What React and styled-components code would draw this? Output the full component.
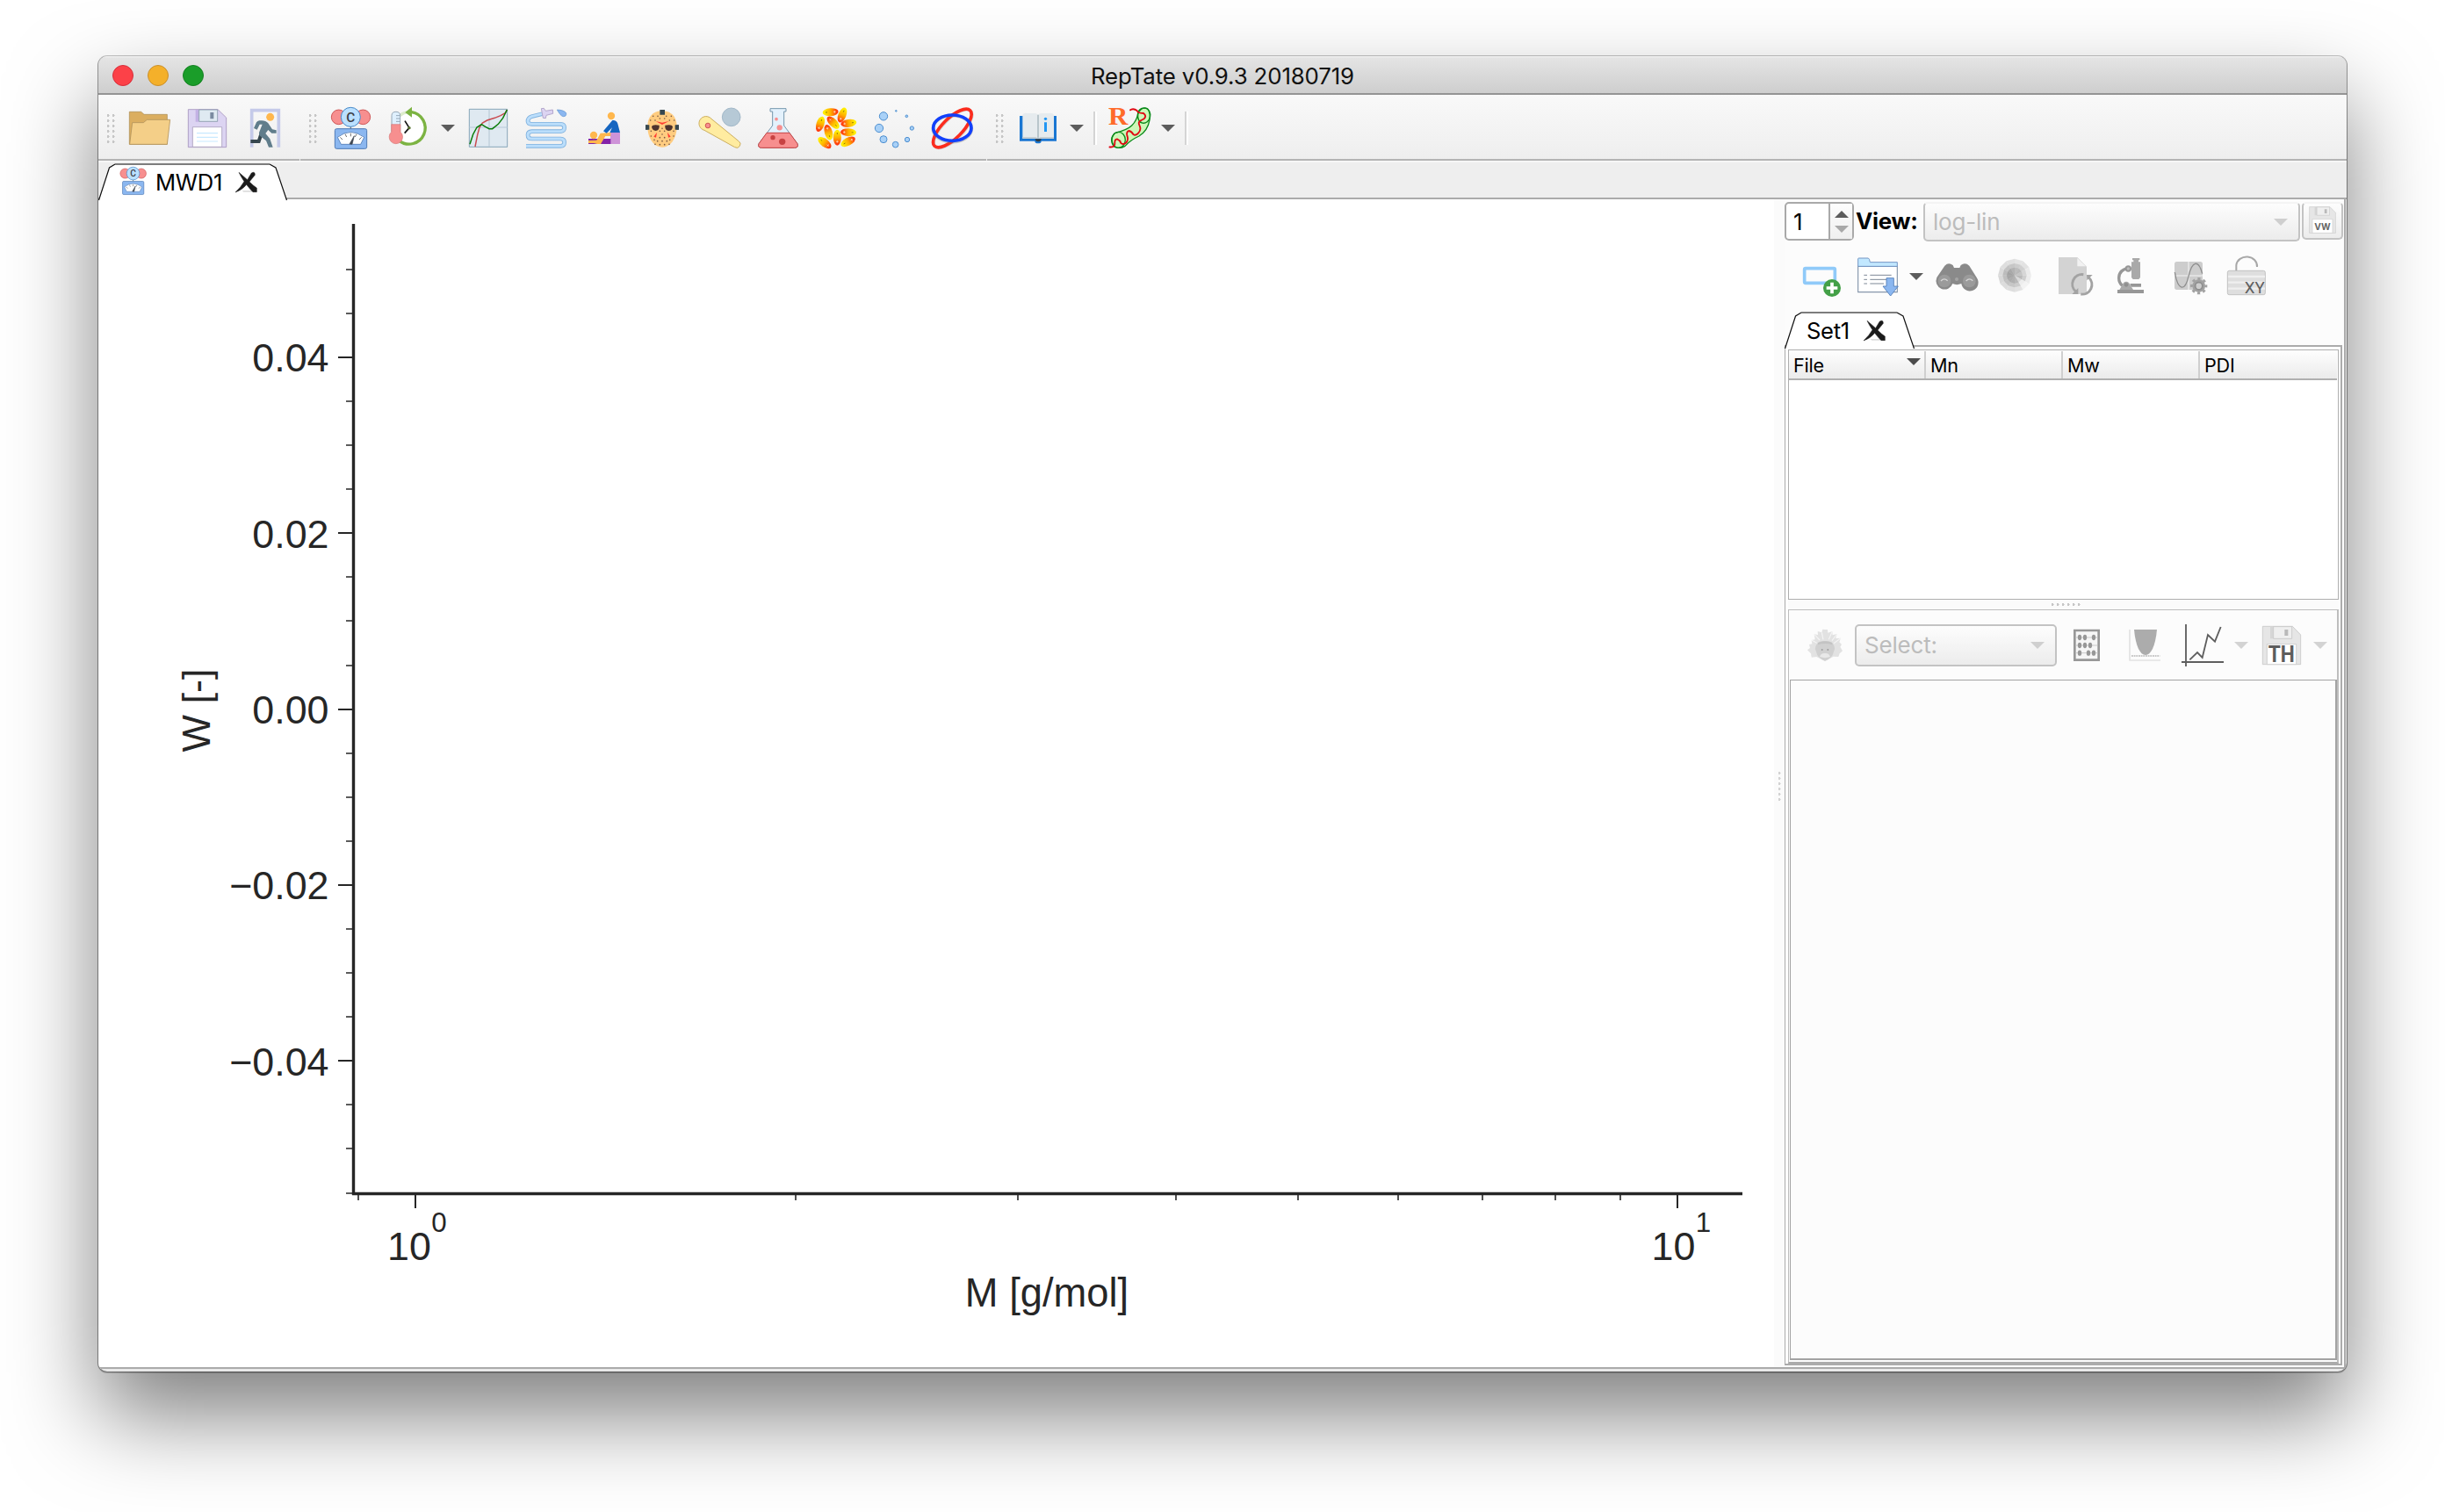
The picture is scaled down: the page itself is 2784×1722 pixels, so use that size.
import React from "react";
import styled, { createGlobalStyle, css } from "styled-components";

const Global = createGlobalStyle`
  *, *::before, *::after { box-sizing: border-box; }
  html, body { margin: 0; background: #fff; overflow: hidden; }
  body { font-family: Inter, "Liberation Sans", sans-serif; color: #000; }
  svg { display: block; flex: none; overflow: visible; }
`;

const line = "#ababab";

/* ---------- window ---------- */
const Page = styled.div`
  width: 2784px;
  height: 1722px;
  padding: 64px 112px 160px;
  background: #fff;
`;
const Window = styled.main`
  width: 2560px;
  height: 1498px;
  display: flex;
  flex-direction: column;
  overflow: hidden;
  border-radius: 10px;
  background: #e9e9e9;
  box-shadow: 0 0 0 1px rgba(0, 0, 0, 0.24), 0 1px 0 1px rgba(0, 0, 0, 0.2), 0 50px 100px rgba(0, 0, 0, 0.5);
`;
const TitleBar = styled.header`
  height: 44px;
  flex: none;
  display: grid;
  grid-template-columns: 1fr auto 1fr;
  align-items: center;
  padding: 0 16px;
  background: linear-gradient(#f4f4f4 0, #e4e4e4 2px, #cecece);
  border-bottom: 2px solid #949494;
`;
const Lights = styled.div`
  display: flex;
  gap: 16px;
  padding-top: 2px;
`;
const Light = styled.i`
  width: 24px;
  height: 24px;
  border-radius: 50%;
  background: ${(p) => p.$fill};
  border: 1px solid ${(p) => p.$edge};
`;
const Title = styled.h1`
  margin: 0;
  padding-top: 3px;
  font-size: 25.8px;
  line-height: 32px;
  font-weight: 400;
  letter-spacing: -0.12px;
  color: #111;
  white-space: nowrap;
`;

/* ---------- toolbars ---------- */
const ToolBar = styled.nav`
  height: 75px;
  flex: none;
  display: flex;
  background: linear-gradient(#f9f9f9, #eeeeee);
`;
const ToolGroup = styled.div`
  display: flex;
  align-items: center;
  height: 75px;
  padding: 3px ${(p) => p.$end || 0}px 0 ${(p) => p.$start || 0}px;
  border-bottom: 2px solid #b4b4b4;
  margin-right: ${(p) => (p.$last ? 0 : 1)}px;
  flex: ${(p) => (p.$last ? 1 : "none")};
`;
const Handle = styled.i`
  width: 9px;
  height: 33px;
  margin-right: 6px;
  background: radial-gradient(circle at 1px 1.5px, #c6c6c6 1.4px, transparent 1.7px) 0 0 / 6px 6px;
  ${(p) =>
    p.$row &&
    css`
      width: 33px;
      height: 3px;
      margin: 0;
    `}
  ${(p) =>
    p.$column &&
    css`
      width: 3px;
      height: 33px;
      margin: 0;
      opacity: 0.75;
    `}
`;
const ToolButton = styled.button`
  width: 66px;
  height: 66px;
  padding: 0;
  border: 0;
  background: none;
  display: flex;
  align-items: center;
  justify-content: center;
  flex: none;
`;
const Caret = styled.i`
  width: ${(p) => p.$width || 24}px;
  padding-right: ${(p) => p.$shift || 0}px;
  display: flex;
  justify-content: center;
  flex: none;
  &::after {
    content: "";
    border: 8px solid transparent;
    border-top-color: ${(p) => p.$color || "#5c5c5c"};
    border-bottom: 0;
    ${(p) =>
      p.$up &&
      css`
        border-bottom: 8px solid ${p.$color || "#5c5c5c"};
        border-top: 0;
      `}
  }
`;
const Divider = styled.i`
  width: 4px;
  height: 38px;
  margin: 0 4px 0 6px;
  border-left: 2px solid #d4d4d4;
  border-right: 2px solid #fff;
`;

/* ---------- tabs ---------- */
const TabStrip = styled.div`
  height: 44px;
  flex: none;
  display: flex;
  align-items: flex-end;
  background: linear-gradient(#f6f6f6 0 2px, #eeeeee 2px);
  border-bottom: 2px solid ${line};
`;
const Tab = styled.div`
  position: relative;
  z-index: 1;
  width: ${(p) => p.$width}px;
  height: 44px;
  margin-bottom: -4px;
  padding: 1px 0 0 ${(p) => p.$inset}px;
  display: flex;
  align-items: center;
  font-size: 25.6px;
  line-height: 30px;
  flex: none;
`;
const TabShape = styled.svg`
  position: absolute;
  inset: 0;
  z-index: -1;
`;
const TabText = styled.span`
  width: ${(p) => p.$width}px;
  padding-top: 1px;
  letter-spacing: -0.3px;
  white-space: nowrap;
`;

/* ---------- body ---------- */
const Body = styled.div`
  height: 1332px;
  margin-right: 1px;
  display: flex;
  background: #fff;
  border-right: 2px solid ${line};
  border-bottom: 2px solid ${line};
`;
const PlotArea = styled.section`
  width: 1908px;
  flex: none;
`;
const SplitBar = styled.div`
  width: 12px;
  flex: none;
  display: flex;
  align-items: center;
  justify-content: center;
  padding: 7px 0 0 1px;
  background: #fbfbfb;
`;
const Side = styled.aside`
  flex: 1;
  min-width: 0;
  background: #fcfcfc;
  display: flex;
  flex-direction: column;
  padding-top: 3px;
`;
const ViewRow = styled.div`
  height: 45px;
  display: flex;
  align-items: flex-start;
`;
const Spin = styled.div`
  width: 79px;
  height: 44px;
  display: flex;
  border: 2px solid #a9a9a9;
  border-radius: 5px;
  background: #fff;
  font-size: 26px;
  line-height: 41px;
`;
const SpinValue = styled.span`
  width: 50px;
  padding-left: 8px;
  border-right: 2px solid #a9a9a9;
`;
const SpinArrows = styled.span`
  flex: 1;
  display: flex;
  flex-direction: column;
  align-items: center;
  justify-content: center;
  gap: 9px;
  background: linear-gradient(#fdfdfd, #efefef);
`;
const ViewLabel = styled.b`
  width: 79px;
  padding-left: 2px;
  font-size: 25.9px;
  line-height: 44px;
  font-weight: 700;
  letter-spacing: -0.3px;
`;
const Combo = styled.div`
  width: ${(p) => p.$width}px;
  height: ${(p) => p.$height}px;
  margin: 0 ${(p) => p.$gap || 0}px;
  padding: 0 12px 0 9px;
  display: flex;
  align-items: center;
  justify-content: space-between;
  border: 2px solid #c3c3c3;
  border-radius: 5px;
  border-top-color: ${(p) => (p.$openTop ? "#f4f4f4" : "#c3c3c3")};
  background: linear-gradient(#fdfdfd, #ececec);
  color: #bcbcbc;
  font-size: 26px;
  letter-spacing: -0.2px;
  flex: none;
`;
const SmallButton = styled.button`
  width: 47px;
  height: 43px;
  margin-left: 2px;
  padding: 0 0 2px;
  display: flex;
  align-items: center;
  justify-content: center;
  border: 2px solid #c3c3c3;
  border-top-color: #f4f4f4;
  border-radius: 5px;
  background: linear-gradient(#fdfdfd, #ececec);
`;
const IconRow = styled.div`
  height: 79px;
  padding: 1px 0 0 9px;
  display: flex;
  align-items: center;
`;
const SetTabs = styled.div`
  height: 41px;
  margin-bottom: -2px;
  display: flex;
  align-items: flex-start;
  position: relative;
`;
const Frame = styled.div`
  width: 635px;
  height: 1162px;
  padding: 3px 2px 0 3px;
  border: 2px solid ${line};
  border-left-width: 1px;
  background: #fff;
`;
const Table = styled.table`
  display: block;
  height: 285px;
  border: 1px solid #aeaeae;
  border-spacing: 0;
  background: #fff;
`;
const HeadRow = styled.tr`
  display: flex;
  height: 34px;
  padding-top: 1px;
  background: linear-gradient(#fefefe, #ebebeb);
  border-bottom: 2px solid #b0b0b0;
`;
const Head = styled.th`
  width: 156px;
  padding: 0 4px 0 5px;
  display: flex;
  align-items: center;
  justify-content: space-between;
  font-size: 21.6px;
  font-weight: 400;
  letter-spacing: -0.2px;
  border-right: ${(p) => (p.$last ? 0 : 2)}px solid #cfcfcf;
`;
const SortMark = styled.span`
  padding-bottom: 8px;
`;
const RowSplit = styled.div`
  height: 11px;
  display: flex;
  align-items: center;
  justify-content: center;
  padding-left: 5px;
  background: #fbfbfb;
`;
const Theory = styled.section`
  height: 859px;
  display: flex;
  flex-direction: column;
  padding: 0 0 2px 1px;
  border: 1px solid #bdbdbd;
  border-right-width: 2px;
  border-bottom: 2px solid ${line};
  background: #fcfcfc;
`;
const TheoryTools = styled.div`
  height: 79px;
  padding-left: 7px;
  display: flex;
  align-items: center;
  flex: none;
`;
const Output = styled.div`
  flex: 1;
  border: 1px solid #a3a3a3;
  border-right-width: 2px;
  border-bottom-width: 2px;
  background: #fcfcfc;
`;

/* ---------- icons ---------- */
const Icon = ({ at, size = 48, box = 144, children }) => (
  <svg width={size} height={size} viewBox={`${at[0]} ${at[1]} ${box} ${box}`} aria-hidden="true">
    {children}
  </svg>
);

const Folder = () => (
  <Icon at={[138, 201]}>
    <g stroke="#b3945c" strokeWidth="2.5">
      <path d="M142 328V217H182L192 226H271V328Z" fill="#dbae60" />
      <path d="M143 328 152 254H190L202 244H281L271 328Z" fill="#f4cf88" />
    </g>
  </Icon>
);
const Floppy = () => (
  <Icon at={[336, 201]}>
    <path d="M343 209H444L473 237V338H343Z" fill="#dcd4f2" stroke="#a593bd" strokeWidth="2.5" />
    <path d="M368 210H379V251H368Z" fill="#c3b2e4" />
    <path d="M380 210H443V250H380Z" fill="#dfeaf2" stroke="#8698a8" strokeWidth="2.5" />
    <path d="M418 219H430V241H418Z" fill="#7a8ba0" />
    <path d="M358 269H458V337H358Z" fill="#fff" stroke="#a9a0bd" strokeWidth="2.5" />
    <path d="M372 290H444M372 304H444M372 318H444" stroke="#c8e9ff" strokeWidth="3.5" />
  </Icon>
);
const Exit = () => (
  <Icon at={[534, 201]}>
    <path d="M560 338V212H652V338" fill="none" stroke="#c5cae9" strokeWidth="11" />
    <circle cx="623" cy="235" r="13.5" fill="#ffb74d" />
    <path d="M594 288 584 318H556" fill="none" stroke="#37474f" strokeWidth="12" />
    <path d="M586 247Q606 244 616 256L630 277 644 280V290H628L616 279 607 291 622 309 632 338H618L609 316 588 299Q582 292 587 283L596 260H587L578 278 567 273 576 253Q579 248 586 247Z" fill="#607d8b" />
  </Icon>
);
const Mwd = ({ size }) => (
  <Icon at={[828, 201]} size={size}>
    <g fill="#f78f8f" stroke="#c74343" strokeWidth="2.5">
      <circle cx="857" cy="235" r="25" />
      <circle cx="940" cy="235" r="25" />
    </g>
    <path d="M898 267V276" stroke="#555" strokeWidth="3" />
    <circle cx="898" cy="235" r="33" fill="#bae0ff" stroke="#4788c7" strokeWidth="3" />
    <text x="898" y="251" textAnchor="middle" fontFamily="Roboto, sans-serif" fontSize="46" fontWeight="500" fill="#3d3d45">C</text>
    <rect x="844" y="275" width="109" height="68" rx="6" fill="#8bb7f0" stroke="#4e7ab5" strokeWidth="3" />
    <path d="M853 304Q898 269 944 304L932 328H865Z" fill="#fff" stroke="#4e7ab5" strokeWidth="2.5" />
    <path d="M862 304 870 312M879 293 884 303M898 290V301M918 293 913 303M935 304 927 312" stroke="#555" strokeWidth="2.5" />
    <path d="M894 327 910 299 903 328Z" fill="#3e4651" stroke="#3e4651" strokeWidth="2" />
  </Icon>
);
const Tts = () => (
  <Icon at={[1026, 201]}>
    <circle cx="1098" cy="272" r="56" fill="#fff" />
    <path d="M1065 230A54 54 0 0 1 1096 218" fill="none" stroke="#dcebcb" strokeWidth="10" />
    <path d="M1106 218A55 55 0 1 1 1064 316" fill="none" stroke="#7cb342" strokeWidth="10" />
    <path d="M1084 219 1107 200V236Z" fill="#7cb342" />
    <path d="M1083 248 1098 272 1082 290" fill="none" stroke="#111" strokeWidth="5" />
    <circle cx="1098" cy="272" r="5" fill="#55702c" />
    <path d="M1038 285V230Q1038 217 1052.500 217T1067 230V285" fill="#dff0fe" stroke="#8698a8" strokeWidth="2.5" />
    <path d="M1037 260H1068V286A23 23 0 1 1 1037 286Z" fill="#f78f8f" stroke="#d87878" strokeWidth="2" />
    <path d="M1053 230H1066M1053 240H1066M1053 250H1066" stroke="#8698a8" strokeWidth="2.500" />
  </Icon>
);
const FitChart = () => (
  <Icon at={[36, 51]}>
    <path d="M43 58H173V187H43Z" fill="#dfe9f1" stroke="#7496ad" strokeWidth="2.5" />
    <path d="M111 59V186M44 120H172" stroke="#c5d3df" strokeWidth="5" />
    <path d="M63 186 71 146 78 120 88 105 104 96 130 88 150 80 166 71 172 60" fill="none" stroke="#c94b50" strokeWidth="4.500" />
    <path d="M45 178 56 144 69 120 85 110 98 118 111 125H122L142 109 158 88 172 60" fill="none" stroke="#0b7d0b" strokeWidth="4.500" />
  </Icon>
);
const Hose = () => (
  <Icon at={[234, 51]}>
    {[["#7fb1de", 14], ["#bbdefb", 9]].map(([c, w]) => (
      <path key={c} d="M292 74 256 83Q243 88 243 99 243 109 257 109H355Q368 110 368 121 368 133 355 134H257Q243 135 243 146 243 159 257 159H355Q368 160 368 171 368 184 355 184H237" fill="none" stroke={c} strokeWidth={w} />
    ))}
    <path d="M289 56 298 55 304 64 328 60 329 73 306 79 304 89 295 88Z" fill="#dcd4f2" stroke="#a99bc4" strokeWidth="2.500" />
    <path d="M343 60Q367 61 374 71 376 83 364 83 355 82 343 60Z" fill="#8bb7f0" stroke="#5c91cf" strokeWidth="2" />
  </Icon>
);
const Creep = () => (
  <Icon at={[432, 51]}>
    <path d="M525 137H558V177H525Z" fill="#ce93d8" />
    <path d="M450 159H526V177H450Z" fill="#8322a8" />
    <circle cx="468" cy="147" r="12.500" fill="#ffb74d" />
    <path d="M450 165 478 164 491 140 526 138V150H508L492 177H480L468 174H450Z" fill="#ffb74d" />
    <circle cx="528" cy="81" r="12.500" fill="#ffb74d" />
    <path d="M532 96Q545 94 550 107L558 138H523L531 121 512 140 501 133Z" fill="#1565c0" />
  </Icon>
);
const maskHoles = [
  [671, 82], [687, 82], [716, 82], [733, 82], [662, 96], [678, 96], [694, 90], [710, 90], [727, 96], [743, 96],
  [702, 124], [694, 133], [710, 133], [664, 133], [741, 133], [702, 144], [664, 150], [694, 155], [710, 155], [741, 150],
  [702, 167], [675, 163], [728, 163], [686, 167], [718, 167], [678, 178], [694, 179], [710, 179], [726, 178],
];
const Mask = () => (
  <Icon at={[630, 51]}>
    <path d="M646 112H758V128H646Z" fill="#455a64" />
    <path d="M702 64C735 64 752 85 752 118 752 155 732 188 702 188S652 155 652 118C652 85 669 64 702 64Z" fill="#ffcc80" />
    <path d="M694 60H711V77H694ZM645 112H658V128H645ZM746 112H759V128H746Z" fill="#37474f" />
    <path d="M680 99 702 104 725 99 702 111ZM684 137 673 152 681 155ZM720 137 731 152 723 155Z" fill="#ff3d32" />
    <path d="M666 117Q670 109 692 113 694 131 680 132 667 131 666 117ZM738 117Q734 109 712 113 710 131 724 132 737 131 738 117Z" fill="#4e342e" />
    {maskHoles.map(([x, y]) => <circle key={`${x}-${y}`} cx={x} cy={y} r="2.500" fill="#7a5a42" />)}
  </Icon>
);
const BatBall = () => (
  <Icon at={[828, 51]}>
    <circle cx="938" cy="85" r="31" fill="#b6c9d6" stroke="#98b0c2" strokeWidth="2.5" />
    <path d="M870 91 963 167A12 12 0 0 1 950 188L846 130A24 24 0 1 1 870 91Z" fill="#ffeca0" stroke="#ccae5f" strokeWidth="3" />
    <circle cx="858" cy="114" r="8.500" fill="#f78f8f" stroke="#c74343" strokeWidth="2.5" />
  </Icon>
);
const Flask = () => (
  <Icon at={[1026, 51]}>
    <path d="M1071 56H1125V66H1118V114L1164 176Q1169 190 1154 190H1042Q1027 190 1032 176L1079 114V66H1071Z" fill="#dff0fe" fillOpacity=".8" stroke="#7496ad" strokeWidth="3" />
    <path d="M1059 139H1137L1164 176Q1169 190 1154 190H1042Q1027 190 1032 176Z" fill="#f78f8f" stroke="#c74343" strokeWidth="3" />
    <circle cx="1092" cy="92" r="5.500" fill="#f78f8f" />
    <circle cx="1103" cy="121" r="9.500" fill="#f78f8f" />
    <circle cx="1080" cy="155" r="8" fill="#c74343" />
    <circle cx="1112" cy="169" r="11" fill="#c74343" />
  </Icon>
);
const pills = [
  [77, 68, -4], [117, 78, 112], [42, 109, 108], [86, 104, 225], [139, 106, 172], [70, 137, 255],
  [100, 155, 90], [138, 137, 182], [57, 173, 38], [137, 169, -28],
];
const Dielectric = () => (
  <Icon at={[24, 51]}>
    <defs>
      <linearGradient id="pill">
        <stop offset=".1" stopColor="#ffee00" />
        <stop offset=".5" stopColor="#ffb000" />
        <stop offset=".9" stopColor="#ff3c10" />
      </linearGradient>
    </defs>
    {pills.map(([x, y, a]) => (
      <g key={`${x}-${y}`} transform={`translate(${x} ${y}) rotate(${a})`}>
        <ellipse rx="27" ry="13.500" fill="url(#pill)" />
        <path d="M-17 0H-11" stroke="#6b5a00" strokeWidth="2" />
        <path d="M10 0H18M14-4V4" stroke="#ffe2cf" strokeWidth="2" />
      </g>
    ))}
  </Icon>
);
const Particles = () => (
  <Icon at={[222, 51]}>
    <g fill="#a9d1f7" stroke="#4e8fd0" strokeWidth="3">
      {[[258, 82, 14], [243, 123, 14], [258, 161, 12], [299, 179, 10], [339, 162, 8], [355, 123, 6.500], [337, 82, 4], [301, 64, 2.500]].map(([x, y, r]) => (
        <circle key={`${x}-${y}`} cx={x} cy={y} r={r} />
      ))}
    </g>
  </Icon>
);
const Rings = () => (
  <Icon at={[420, 51]}>
    <g fill="none" strokeWidth="11">
      <ellipse cx="495" cy="125" rx="86" ry="34" transform="rotate(-45 495 125)" stroke="#9a9a9a" strokeOpacity=".35" />
      <ellipse cx="493" cy="123" rx="86" ry="34" transform="rotate(-45 493 123)" stroke="#fb2c1e" />
      <ellipse cx="493" cy="125" rx="66" ry="45" stroke="#777" strokeOpacity=".35" />
      <ellipse cx="493" cy="122" rx="65" ry="44" stroke="#1240fb" />
    </g>
  </Icon>
);
const Book = () => (
  <Icon at={[714, 51]}>
    <path d="M723 81H849V167H797A11 8 0 0 1 775 167H723Z" fill="#1976d2" />
    <path d="M776 160H797A10 8 0 0 1 776 160Z" fill="#2f3b43" />
    <path d="M733 77Q738 70 748 72H776Q785 73 786 78 788 72 797 72H825Q836 70 840 77V158H733Z" fill="#e6ebee" />
    <path d="M733 153H779L786 158 793 153H840V159H733Z" fill="#c5ced3" />
    <path d="M786 77V157" stroke="#b0bec5" strokeWidth="5" />
    <path d="M807 103H816V135H807Z" fill="#2196f3" />
    <circle cx="811.500" cy="91" r="5" fill="#2196f3" />
  </Icon>
);
const RepTateLogo = () => (
  <Icon at={[1026, 51]}>
    <g fill="#cdf7b8" stroke="#0b8a1b" strokeWidth="4">
      <path d="M1048 140Q1092 128 1106 114 1124 96 1127 72 1132 50 1157 55 1171 64 1167 95 1160 133 1131 150 1102 163 1083 184 1064 196 1044 185 1028 160 1048 140Z" />
      <ellipse cx="1061" cy="163" rx="23" ry="27" fill="none" />
      <ellipse cx="1148" cy="80" rx="21" ry="26" fill="none" transform="rotate(12 1148 80)" />
    </g>
    <text x="1026" y="110" fontFamily="Liberation Serif, serif" fontWeight="700" fontSize="87" textLength="67" lengthAdjust="spacingAndGlyphs" fill="#ff6a2a">R</text>
    <path d="M1028 187Q1046 190 1048 177 1047 160 1056 160 1066 164 1069 174 1080 182 1089 170 1095 160 1090 148 1087 135 1096 132 1106 134 1111 144 1120 150 1129 139 1139 128 1133 115 1127 103 1134 98L1148 91Q1158 81 1146 72 1125 71 1124 63 1111 53 1099 62" fill="none" stroke="#e00712" strokeWidth="5.500" />
  </Icon>
);
const CloseX = () => (
  <svg width="26" height="25" viewBox="504 421 78 75" aria-hidden="true">
    <path d="M530 487 580 487V492H535Z" fill="#ddd" />
    <path d="M519 425 548 450 562 427Q574 420 574 434L555 457Q570 472 580 478V492H567Q558 484 545 467 531 485 507 493 527 474 537 456 526 440 519 425Z" fill="#1b1b1b" stroke="#1b1b1b" strokeWidth="1.500" />
  </svg>
);

/* side panel icons */
const AddDummy = () => (
  <Icon at={[120, 213]}>
    <rect x="134" y="257" width="104" height="50" rx="4" fill="none" stroke="#90caf9" strokeWidth="11" />
    <circle cx="228" cy="324" r="30" fill="#43a047" />
    <path d="M228 305V343M209 324H247" stroke="#fff" strokeWidth="11" />
  </Icon>
);
const OpenTable = () => (
  <Icon at={[318, 213]}>
    <path d="M317 250H451V338H317Z" fill="#fff" stroke="#8696ab" strokeWidth="3.500" />
    <path d="M317 250V224Q317 222 320 222H352Q356 223 358 236H451V250Z" fill="#c2e8ff" stroke="#7496c4" strokeWidth="3" />
    <path d="M337 280H348M358 280H431M337 295H348M358 295H431M337 309H348M358 309H405" stroke="#7d8796" strokeWidth="3" />
    <path d="M414 290H439V318H454L428 351 402 318H414Z" fill="#8bb7f0" stroke="#4e7ab5" strokeWidth="2.500" />
  </Icon>
);
const Binoculars = () => (
  <Icon at={[582, 213]}>
    <path d="M613 248Q626 235 641 246L645 255H664L668 246Q683 235 697 248L722 288A29 29 0 1 1 670 309Q654 316 640 309A29 29 0 1 1 586 288Z" fill="#8a8a8a" />
    <circle cx="612" cy="300" r="22" fill="#9b9b9b" />
    <circle cx="697" cy="300" r="22" fill="#9b9b9b" />
    <path d="M600 300Q611 288 623 299M686 300Q697 288 709 299" fill="none" stroke="#d6d6d6" strokeWidth="4" />
    <circle cx="654" cy="294" r="6" fill="#a4a4a4" />
  </Icon>
);
const wedge = (cx, cy, r, i, n) => {
  const a = (i / n) * 2 * Math.PI;
  const b = ((i + 1) / n) * 2 * Math.PI;
  return `M${cx} ${cy}L${cx + r * Math.cos(a)} ${cy + r * Math.sin(a)}L${cx + r * Math.cos(b)} ${cy + r * Math.sin(b)}Z`;
};
const wheel = [
  [57, ["#ececec", "#f3f3f3", "#e2e2e2", "#dedede", "#dcdcdc", "#d8d8d8", "#dadada", "#dedede", "#e0e0e0", "#e4e4e4", "#e2e2e2", "#ebebeb"]],
  [41, ["#cfcfcf", "#ededed", "#cccccc", "#c6c6c6", "#c2c2c2", "#bfbfbf", "#bcbcbc", "#c2c2c2", "#c6c6c6", "#cccccc", "#cfcfcf", "#d6d6d6"]],
  [27, ["#bababa", "#d9d9d9", "#b8b8b8", "#b0b0b0", "#acacac", "#a6a6a6", "#a2a2a2", "#a8a8a8", "#b2b2b2", "#bcbcbc", "#b8b8b8", "#c4c4c4"]],
];
const ColorWheel = () => (
  <Icon at={[780, 213]}>
    {wheel.map(([r, tones]) => tones.map((t, i) => <path key={`${r}-${i}`} d={wedge(852, 281, r, i, 12)} fill={t} />))}
  </Icon>
);
const Reload = () => (
  <Icon at={[18, 213]}>
    <path d="M42 219H106L138 251V345H42Z" fill="#d3d3d3" />
    <path d="M106 222V250H135Z" fill="#f2f2f2" />
    <g fill="none" stroke="#a3a3a3" strokeWidth="9">
      <path d="M101 336A33 33 0 0 1 127 278" />
      <path d="M145 288A33 33 0 0 1 118 345" />
    </g>
    <path d="M138 279H158L139 298ZM88 345 109 324V345Z" fill="#a3a3a3" />
  </Icon>
);
const Microscope = () => (
  <Icon at={[216, 213]}>
    <path d="M294 222H319V229H315V235H321V288L316 294H296L291 288V235H298V229H294Z" fill="#a9a9a9" />
    <path d="M280 256Q248 262 248 290 248 306 260 316" fill="none" stroke="#979797" strokeWidth="10" />
    <circle cx="280" cy="258" r="11" fill="#979797" />
    <path d="M243 330H333V342H243ZM286 309H324V320H290Z" fill="#979797" />
    <path d="M250 330 264 306Q273 298 282 306L297 330Z" fill="#a9a9a9" />
    <circle cx="273" cy="313" r="7" fill="#8f8f8f" />
    <circle cx="280" cy="258" r="5" fill="#bcbcbc" />
  </Icon>
);
const WaveGear = () => (
  <Icon at={[414, 213]}>
    <rect x="438" y="234" width="96" height="96" rx="8" fill="#cdcdcd" />
    <path d="M486 234V330M438 282H534" stroke="#e6e6e6" strokeWidth="5" />
    <path d="M439 270C450 335 474 337 486 284S520 225 533 275" fill="none" stroke="#8e8e8e" strokeWidth="4" />
    <circle cx="521" cy="317" r="16" fill="none" stroke="#a2a2a2" strokeWidth="12" />
    <circle cx="521" cy="317" r="24.500" fill="none" stroke="#a2a2a2" strokeWidth="9" strokeDasharray="9.620 9.620" strokeDashoffset="4.800" />
    <circle cx="521" cy="317" r="12.500" fill="none" stroke="#8e8e8e" strokeWidth="5" />
  </Icon>
);
const LockXY = () => (
  <Icon at={[612, 213]}>
    <path d="M649 266V246A35 31 0 0 1 720 252" fill="none" stroke="#a8a8a8" strokeWidth="6" />
    <rect x="619" y="265" width="129" height="82" rx="6" fill="#dedede" stroke="#bababa" strokeWidth="2.500" />
    <path d="M621 285H747M621 305H747M621 326H747" stroke="#efefef" strokeWidth="7" />
    <text x="677" y="343" fontFamily="Roboto, sans-serif" fontSize="56" textLength="69" lengthAdjust="spacingAndGlyphs" fill="#5f5f5f">XY</text>
  </Icon>
);
const GreyFloppy = ({ label }) => (
  <>
    <path d="M709 127H811L839 156V257H709Z" fill="#e6e6e6" stroke="#c6c6c6" strokeWidth="2.500" />
    <path d="M735 128H746V169H735Z" fill="#d6d6d6" />
    <path d="M746 128H809V169H746Z" fill="#efefef" stroke="#c6c6c6" strokeWidth="2.500" />
    <path d="M784 138H796V159H784Z" fill="#b9b9b9" />
    <path d="M724 188H824V257H724Z" fill="#fff" stroke="#c9c9c9" strokeWidth="2.500" />
    {label}
  </>
);
const SaveView = () => (
  <Icon at={[702, 120]} size={33}>
    <GreyFloppy label={<text x="774" y="243" textAnchor="middle" fontFamily="Inter, sans-serif" fontWeight="700" fontSize="48" textLength="80" lengthAdjust="spacingAndGlyphs" fill="#666">VW</text>} />
  </Icon>
);
const SaveTheory = () => (
  <Icon at={[702, 120]}>
    <GreyFloppy label={<text x="773" y="250" textAnchor="middle" fontFamily="Roboto, sans-serif" fontWeight="700" fontSize="76" textLength="90" lengthAdjust="spacingAndGlyphs" fill="#5d5d5d">TH</text>} />
  </Icon>
);
const Einstein = () => (
  <Icon at={[132, 120]}>
    <path d="M144 208 153 201 150 189 160 187 158 174 170 172 167 154 180 156 179 144 193 148 196 137 205 138 213 138 214 149 229 144 230 157 245 153 241 168 258 167 253 181 261 189 256 197 264 211 254 220 250 231 233 230 204 246 175 231 158 233 156 220Z" fill="#e2e2e2" />
    <path d="M172 196Q180 174 204 177 229 174 236 196 240 205 234 214 230 236 204 245 178 236 174 214 168 205 172 196Z" fill="#d0d0d0" />
    <path d="M180 183Q204 172 229 183V190Q204 182 180 190Z" fill="#c3c3c3" />
    <path d="M186 231Q190 218 204 219 218 218 222 231 204 238 186 231Z" fill="#e8e8e8" />
    <circle cx="194" cy="207" r="3" fill="#9d9d9d" />
    <circle cx="214" cy="207" r="3" fill="#9d9d9d" />
    <path d="M193 148 198 172M167 154 186 174M158 174 176 184M229 144 217 172M245 153 228 176M258 167 234 185" stroke="#f4f4f4" strokeWidth="3.500" />
  </Icon>
);
const Abacus = () => (
  <Icon at={[36, 120]}>
    <path d="M67 141H149V242H67Z" fill="#f6f6f6" stroke="#989898" strokeWidth="8" />
    <path d="M71 165H145M71 192H145M71 218H145" stroke="#c9c9c9" strokeWidth="3" />
    {[[84, 165], [102, 165], [132, 165], [84, 192], [102, 192], [120, 192], [84, 218], [114, 218], [132, 218]].map(([x, y]) => (
      <ellipse key={`${x}-${y}`} cx={x} cy={y} rx="6.500" ry="9.500" fill="#979797" />
    ))}
  </Icon>
);
const Peak = () => (
  <Icon at={[234, 120]}>
    <path d="M255 138V243H360" fill="none" stroke="#e2e2e2" strokeWidth="5" />
    <path d="M270 138H348C343 195 327 225 309 225S275 195 270 138Z" fill="#acacac" />
    <path d="M261 228H358" stroke="#b5b5b5" strokeWidth="5" strokeDasharray="5.500 2.500" />
  </Icon>
);
const LineChart = () => (
  <Icon at={[432, 120]}>
    <path d="M447 120V264M432 249H576" stroke="#5e5e5e" strokeWidth="5.500" />
    <path d="M460 241 486 216 503 234 522 156 546 179 566 129" fill="none" stroke="#5e5e5e" strokeWidth="5.500" />
  </Icon>
);

/* ---------- plot ---------- */
const yMajor = ["0.04", "0.02", "0.00", "−0.02", "−0.04"].map((label, i) => ({ label, y: 407 + i * 200.3 }));
const yMinor = Array.from({ length: 21 }, (_, i) => i - 10)
  .filter((k) => k % 4 !== 0)
  .map((k) => 807.600 + k * 50.080);
const xAt = (v) => 473 + Math.log10(v) * 1437;
const xMinor = [0.9, 2, 3, 4, 5, 6, 7, 8, 9].map(xAt);

const PlotText = styled.text`
  font-family: "Liberation Sans", Arial, sans-serif;
  font-size: ${(p) => p.$size || 44.8}px;
  fill: #262626;
`;
const Plot = () => (
  <svg width="1908" height="1330" viewBox="112 227 1908 1330" role="img" aria-label="W against M">
    <g stroke="#262626" fill="none">
      <path d="M402.500 255V1361M401 1359.500H1984" strokeWidth="3.400" />
      <path d={yMajor.map((t) => `M385 ${Math.round(t.y)}H402`).join("")} strokeWidth="2" />
      <path d={[...yMinor, 1359].map((y) => `M394 ${Math.round(y)}H402`).join("")} strokeWidth="1.600" />
      <path d="M473 1359V1376M1910 1359V1376" strokeWidth="2" />
      <path d={xMinor.map((x) => `M${Math.ceil(x)} 1359V1367`).join("")} strokeWidth="1.600" />
    </g>
    {yMajor.map((t) => (
      <PlotText key={t.label} x="374.500" y={t.y + 16.300} textAnchor="end">{t.label}</PlotText>
    ))}
    {[[441, "0"], [1880.500, "1"]].map(([x, power]) => (
      <g key={power}>
        <PlotText x={x} y="1434.700">10</PlotText>
        <PlotText x={x + 50.200} y="1403.300" $size={31.300}>{power}</PlotText>
      </g>
    ))}
    <PlotText x="1192" y="1488" textAnchor="middle" $size={45.300}>M [g/mol]</PlotText>
    <PlotText transform="translate(239.300 809) rotate(-90)" textAnchor="middle" $size={45}>W [-]</PlotText>
  </svg>
);

const DocumentTab = ({ width, inset, textWidth, text, icon }) => (
  <Tab $width={width} $inset={inset}>
    <TabShape width={width} height="44" viewBox={`0 0 ${width} 44`}>
      <path d={`M0.500 44 12.500 6 19 1.500H${width - 20}L${width - 13} 6 ${width - 0.500} 44Z`} fill="#fff" />
      <path d={`M0.500 43 12.500 6 19 2M${width - 20} 2 ${width - 13} 6 ${width - 0.500} 43`} fill="none" stroke="#111" strokeWidth="1.200" />
      <path d={`M19 2H${width - 20}`} stroke="#7d7d7d" strokeWidth="2" />
    </TabShape>
    {icon}
    <TabText $width={textWidth}>{text}</TabText>
    <CloseX />
  </Tab>
);

const Tool = ({ icon: Glyph, label }) => (
  <ToolButton aria-label={label}>
    <Glyph />
  </ToolButton>
);

const TabIcon = styled.span`
  width: 41px;
  padding-bottom: 4px;
`;

export default function App() {
  return (
    <Page>
      <Global />
      <Window>
        <TitleBar>
          <Lights>
            <Light $fill="#fc4148" $edge="#d62f3b" />
            <Light $fill="#f4b02a" $edge="#c98f2d" />
            <Light $fill="#1a9d29" $edge="#158022" />
          </Lights>
          <Title>RepTate v0.9.3 20180719</Title>
        </TitleBar>

        <ToolBar>
          <ToolGroup $start={10} $end={6}>
            <Handle />
            <Tool icon={Folder} label="Open" />
            <Tool icon={Floppy} label="Save" />
            <Tool icon={Exit} label="Quit" />
          </ToolGroup>
          <ToolGroup $start={10} $end={6}>
            <Handle />
            <Tool icon={Mwd} label="MWD" />
            <Tool icon={Tts} label="TTS" />
            <Caret $shift={3} />
            <Tool icon={FitChart} label="LVE" />
            <Tool icon={Hose} label="NLVE" />
            <Tool icon={Creep} label="Creep" />
            <Tool icon={Mask} label="Laos" />
            <Tool icon={BatBall} label="Crystal" />
            <Tool icon={Flask} label="React" />
            <Tool icon={Dielectric} label="Dielectric" />
            <Tool icon={Particles} label="SANS" />
            <Tool icon={Rings} label="Universal" />
          </ToolGroup>
          <ToolGroup $start={10} $last>
            <Handle />
            <Tool icon={Book} label="Help" />
            <Caret $shift={2} />
            <Divider />
            <Tool icon={RepTateLogo} label="About" />
            <Caret $shift={2} />
            <Divider />
          </ToolGroup>
        </ToolBar>

        <TabStrip>
          <DocumentTab
            width={215}
            inset={24}
            textWidth={90}
            text="MWD1"
            icon={<TabIcon><Mwd size={32} /></TabIcon>}
          />
        </TabStrip>

        <Body>
          <PlotArea>
            <Plot />
          </PlotArea>
          <SplitBar>
            <Handle $column />
          </SplitBar>
          <Side>
            <ViewRow>
              <Spin>
                <SpinValue>1</SpinValue>
                <SpinArrows>
                  <Caret $up />
                  <Caret $color="#a8a8a8" />
                </SpinArrows>
              </Spin>
              <ViewLabel>View:</ViewLabel>
              <Combo $width={429} $height={45} $openTop>
                log-lin
                <Caret $width={16} $color="#cfcfcf" />
              </Combo>
              <SmallButton aria-label="Save view">
                <SaveView />
              </SmallButton>
            </ViewRow>

            <IconRow>
              <Tool icon={AddDummy} label="Add" />
              <Tool icon={OpenTable} label="Load" />
              <Caret $width={22} $shift={4} />
              <Tool icon={Binoculars} label="Inspect" />
              <Tool icon={ColorWheel} label="Marker" />
              <Tool icon={Reload} label="Reload" />
              <Tool icon={Microscope} label="Zoom" />
              <Tool icon={WaveGear} label="Shift" />
              <Tool icon={LockXY} label="Lock" />
            </IconRow>

            <SetTabs>
              <DocumentTab width={148} inset={25} textWidth={64} text="Set1" />
            </SetTabs>
            <Frame>
              <Table>
                <thead>
                  <HeadRow>
                    <Head>
                      File
                      <SortMark>
                        <Caret $width={16} $color="#4c4c4c" />
                      </SortMark>
                    </Head>
                    <Head>Mn</Head>
                    <Head>Mw</Head>
                    <Head $last>PDI</Head>
                  </HeadRow>
                </thead>
              </Table>
              <RowSplit>
                <Handle $row />
              </RowSplit>
              <Theory>
                <TheoryTools>
                  <Tool icon={Einstein} label="New theory" />
                  <Combo $width={230} $height={48} $gap={1}>
                    Select:
                    <Caret $width={16} $color="#cfcfcf" />
                  </Combo>
                  <Tool icon={Abacus} label="Calculate" />
                  <Tool icon={Peak} label="Minimise" />
                  <Tool icon={LineChart} label="Limits" />
                  <Caret $color="#d3d3d3" $shift={2} />
                  <Tool icon={SaveTheory} label="Save theory" />
                  <Caret $width={22} $color="#d3d3d3" />
                </TheoryTools>
                <Output />
              </Theory>
            </Frame>
          </Side>
        </Body>
      </Window>
    </Page>
  );
}
